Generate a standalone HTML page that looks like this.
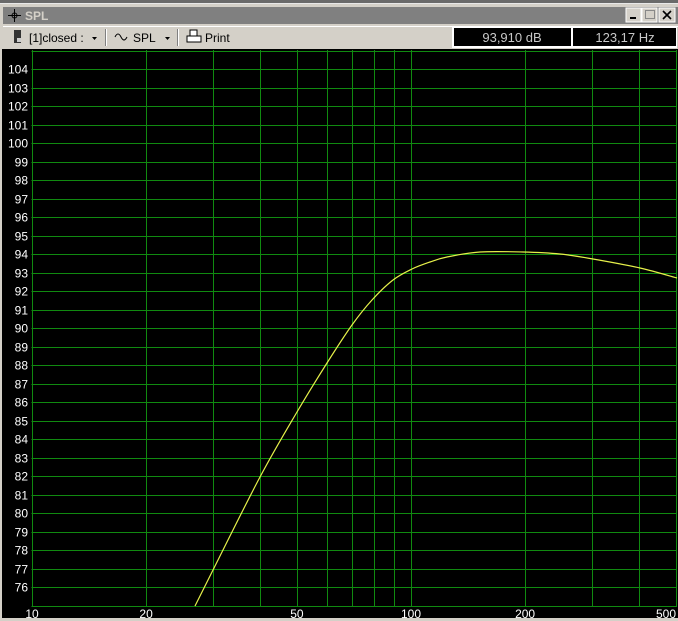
<!DOCTYPE html>
<html><head><meta charset="utf-8"><style>
html,body{margin:0;padding:0;background:#d4d0c8;width:678px;height:621px;overflow:hidden}
svg{display:block}
text{font-family:"Liberation Sans",sans-serif}
</style></head><body>
<svg width="678" height="621" viewBox="0 0 678 621">
<rect x="0" y="0" width="678" height="621" fill="#d4d0c8"/>
<rect x="0" y="0" width="678" height="3" fill="#6a6a6a"/>
<rect x="0" y="3" width="678" height="1" fill="#e8e8e8"/>
<rect x="3" y="7" width="675" height="17" fill="#808080"/>
<g stroke="#000" stroke-width="1"><line x1="8" y1="15.5" x2="21" y2="15.5"/><line x1="14.5" y1="9" x2="14.5" y2="22"/></g>
<circle cx="14.5" cy="15.5" r="2.5" fill="none" stroke="#000"/>
<text x="25" y="20" font-size="12" font-weight="bold" fill="#d4d0c8">SPL</text>
<g>
<rect x="626" y="8" width="15" height="14" fill="#d4d0c8" stroke="#fff"/><rect x="630" y="17" width="6" height="2" fill="#000"/>
<rect x="642" y="8" width="15" height="14" fill="#d4d0c8" stroke="#fff"/><rect x="645.5" y="10.5" width="9" height="8" fill="none" stroke="#888"/>
<rect x="659" y="8" width="16" height="14" fill="#d4d0c8" stroke="#fff"/>
<path d="M663 11L671 19M671 11L663 19" stroke="#000" stroke-width="1.6"/>
</g>
<rect x="3" y="26" width="675" height="22" fill="#d4d0c8"/>
<line x1="3" y1="26.5" x2="678" y2="26.5" stroke="#fff"/>
<rect x="14" y="30" width="7" height="13" fill="#333"/><rect x="17" y="38" width="4" height="4" fill="#ccc"/>
<text x="29" y="42" font-size="12" fill="#000">[1]closed :</text>
<path d="M92 37h5l-2.5 3z" fill="#000"/>
<line x1="105.5" y1="29" x2="105.5" y2="46" stroke="#808080"/><line x1="106.5" y1="29" x2="106.5" y2="46" stroke="#fff"/>
<path d="M115 37q3-6 6 0t6 0" fill="none" stroke="#000"/>
<text x="133" y="42" font-size="12" fill="#000">SPL</text>
<path d="M165 37h5l-2.5 3z" fill="#000"/>
<line x1="177.5" y1="29" x2="177.5" y2="46" stroke="#808080"/><line x1="178.5" y1="29" x2="178.5" y2="46" stroke="#fff"/>
<rect x="190" y="30" width="7" height="6" fill="#fff" stroke="#000"/>
<rect x="187" y="36" width="14" height="6" fill="#fff" stroke="#000"/>
<text x="205" y="42" font-size="12" fill="#000">Print</text>
<rect x="452" y="27" width="225" height="21" fill="#fff"/>
<rect x="454" y="28" width="117" height="18" fill="#000"/>
<rect x="573" y="28" width="103" height="18" fill="#000"/>
<text x="512" y="42" font-size="13" fill="#c8c8c8" text-anchor="middle">93,910 dB</text>
<text x="625" y="42" font-size="13" fill="#c8c8c8" text-anchor="middle">123,17 Hz</text>
<rect x="2" y="49" width="676" height="569" fill="#000"/>
<g stroke="#108a10" stroke-width="1" shape-rendering="crispEdges" id="grid"></g>
<g id="lab" font-size="12" fill="#fff"></g>
<path id="curve" fill="none" stroke="#e6f04a" stroke-width="1.2"/>
<rect x="0" y="618" width="678" height="3" fill="#d4d0c8"/>
</svg>
<script>
var ns="http://www.w3.org/2000/svg",g=document.getElementById('grid'),lab=document.getElementById('lab');
function L(x1,y1,x2,y2){var l=document.createElementNS(ns,'line');l.setAttribute('x1',x1);l.setAttribute('y1',y1);l.setAttribute('x2',x2);l.setAttribute('y2',y2);g.appendChild(l);}
function T(x,y,s,a){var t=document.createElementNS(ns,'text');t.setAttribute('x',x);t.setAttribute('y',y);if(a)t.setAttribute('text-anchor',a);t.textContent=s;lab.appendChild(t);}
function X(f){return 32+379*Math.log10(f/10);}
function Y(d){return 69+(104-d)*18.5;}
for(var d=75;d<=105;d++){var y=Math.round(Y(d))+0.5;L(31.5,y,677,y);if(d>=76&&d<=104)T(28,y+4,String(d),'end');}
var fs=[10,20,30,40,50,60,70,80,90,100,200,300,400,500];
fs.forEach(function(f){var x=Math.round(X(f))+0.5;L(x,50,x,Math.round(Y(75))+0.5);});
[[10,"10"],[20,"20"],[50,"50"],[100,"100"],[200,"200"],[500,"500"]].forEach(function(p){var x=X(p[0]);if(p[0]==500)x=666;T(x,618,p[1],'middle');});
var P=[[195,606],[213,570],[260,477],[297,412],[327,363],[352,325],[372,300],[393,280],[412,269],[430,262],[447,257],[480,252],[523,252],[560,254],[593,259],[640,268],[677,278]];
var d="M"+P[0].join(",");
for(var i=0;i<P.length-1;i++){var p0=P[i-1]||P[i],p1=P[i],p2=P[i+1],p3=P[i+2]||p2;
d+=" C"+(p1[0]+(p2[0]-p0[0])/6)+","+(p1[1]+(p2[1]-p0[1])/6)+" "+(p2[0]-(p3[0]-p1[0])/6)+","+(p2[1]-(p3[1]-p1[1])/6)+" "+p2[0]+","+p2[1];}
document.getElementById('curve').setAttribute('d',d);
</script>
</body></html>
